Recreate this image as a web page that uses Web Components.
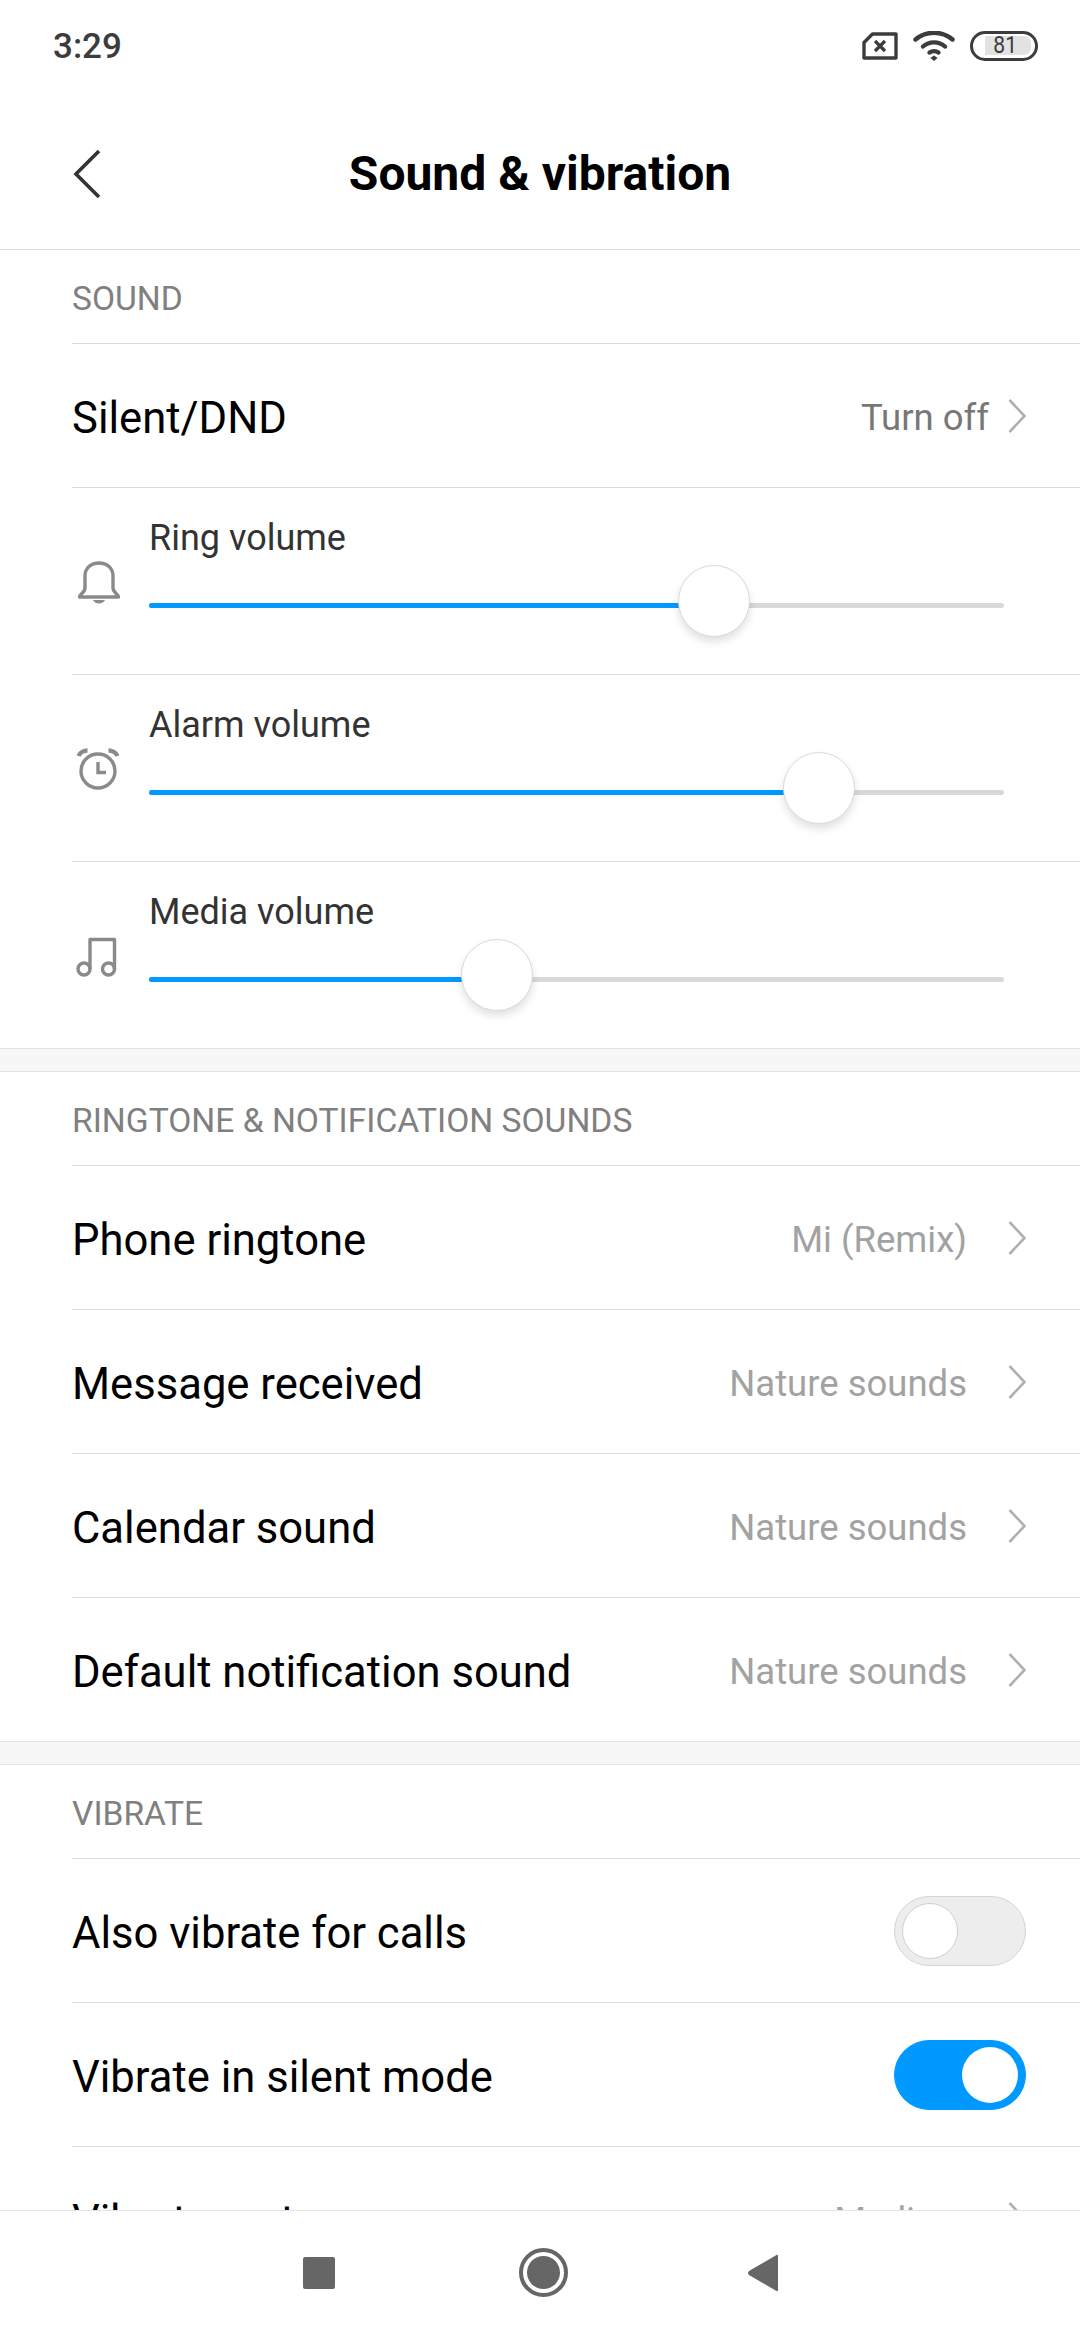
<!DOCTYPE html>
<html><head><meta charset="utf-8">
<style>
html,body{margin:0;padding:0;background:#fff}
body{width:1080px;height:2340px;overflow:hidden;font-family:Roboto,"Liberation Sans",sans-serif}
#app{display:flex;flex-direction:column;width:1080px;height:2340px}
#scroll{flex:1;min-height:0;overflow:hidden}
</style></head><body>
<div id="app">
<status-bar></status-bar>
<title-bar>Sound &amp; vibration</title-bar>
<div id="scroll">
  <section-head>SOUND</section-head>
  <nav-row value="Turn off" dark>Silent/DND</nav-row>
  <volume-row icon="bell" pos="565">Ring volume</volume-row>
  <volume-row icon="alarm" pos="670">Alarm volume</volume-row>
  <volume-row icon="music" pos="348">Media volume</volume-row>
  <section-gap></section-gap>
  <section-head>RINGTONE &amp; NOTIFICATION SOUNDS</section-head>
  <nav-row value="Mi (Remix)">Phone ringtone</nav-row>
  <nav-row value="Nature sounds">Message received</nav-row>
  <nav-row value="Nature sounds">Calendar sound</nav-row>
  <nav-row value="Nature sounds">Default notification sound</nav-row>
  <section-gap></section-gap>
  <section-head>VIBRATE</section-head>
  <toggle-row>Also vibrate for calls</toggle-row>
  <toggle-row on>Vibrate in silent mode</toggle-row>
  <nav-row value="Medium">Vibrate on tap</nav-row>
</div>
<nav-bar></nav-bar>
</div>
<script>
function def(name, html, init){
  customElements.define(name, class extends HTMLElement{
    constructor(){super();this.attachShadow({mode:'open'}).innerHTML=html;}
    connectedCallback(){ if(init) init(this,this.shadowRoot); }
  });
}
def('status-bar',`<style>
:host{display:flex;align-items:center;justify-content:space-between;height:92px;padding:0 42px 0 53px;box-sizing:border-box;color:#3c3c3c}
.t{font:500 35px/1 Roboto,sans-serif}
.r{display:flex;align-items:center;gap:15px}
svg{display:block}
.bat{position:relative;width:68px;height:30px;box-sizing:border-box;border:3.6px solid #3c3c3c;border-radius:15px}
.bat i{position:absolute;left:12px;top:1.5px;height:19px;width:46px;background:#e2e2e2;border-radius:0 7px 7px 0}
.bat span{position:absolute;left:19px;top:-1px;width:21px;text-align:center;font:400 24px/24px Roboto,sans-serif;color:#3c3c3c;transform:scaleX(.88)}
</style><span class="t">3:29</span><div class="r">
<svg width="36" height="28" viewBox="0 0 36 28" fill="none" stroke="#3c3c3c" stroke-width="3.4" stroke-linejoin="round"><path d="M10.500 2H34V26H2V10.500Z"/><path d="M13 9 L23 19 M23 9 L13 19" stroke-width="3.2"/></svg>
<svg width="42" height="30" viewBox="0 0 42 30" fill="none" stroke="#3c3c3c" stroke-width="4.4" stroke-linecap="round"><path d="M2.500 8.500C13 -.500 29 -.500 39.500 8.500"/><path d="M10 15.500C16 10 26 10 32 15.500"/><path d="M16.500 21.500C19 19.800 23 19.800 25.500 21.500" /><path d="M21 24.500l3.600 2.600L21 30l-3.600-2.900z" fill="#3c3c3c" stroke="none"/></svg>
<div class="bat"><i></i><span>81</span></div></div>`);
def('title-bar',`<style>
:host{display:block;position:relative;height:157px;border-bottom:1px solid #dcdcdc}
.b{height:157px;box-sizing:border-box;padding-top:7px;display:flex;align-items:center;justify-content:center;font:700 48px/1 Roboto,sans-serif;color:#000}
svg{position:absolute;left:72px;top:57px}
</style><svg width="30" height="50" viewBox="0 0 30 50" fill="none" stroke="#333" stroke-width="3.6"><path d="M27 2 L4 25 L27 48"/></svg><div class="b"><slot></slot></div>`);
def('section-head',`<style>
:host{display:block;margin-left:72px;height:93px;border-bottom:1px solid #dcdcdc;font:400 33.6px/1 Roboto,sans-serif;color:#808080}
div{height:93px;box-sizing:border-box;padding-top:4px;display:flex;align-items:center}
</style><div><slot></slot></div>`);
def('section-gap',`<style>:host{display:block;position:relative;height:22px;margin-top:-1px;background:#f7f7f7;border-top:1px solid #e2e2e2;border-bottom:1px solid #e2e2e2}</style>`);
const chev=`<svg width="18" height="34" viewBox="0 0 18 34" fill="none" stroke="#b0b0b0" stroke-width="2.6"><path d="M1.500 1 L16.500 17 L1.500 33"/></svg>`;
def('nav-row',`<style>
:host{display:block;margin-left:72px;height:143px;border-bottom:1px solid #dcdcdc;}
.w{height:143px;box-sizing:border-box;padding:6px 54px 0 0;display:flex;align-items:center;justify-content:space-between;font:400 43.6px/1 Roboto,sans-serif;color:#000}
.v{display:flex;align-items:center;gap:41px;font-size:36.5px;color:#a2a2a2}
:host([dark]) .v{color:#777;gap:19px}
svg{display:block;margin-top:-6px}
</style><div class="w"><span><slot></slot></span><span class="v"><span id="v"></span>${chev}</span></div>`,
(el,s)=>{s.getElementById('v').textContent=el.getAttribute('value')});
const icons={
bell:`<svg width="44" height="44" viewBox="0 0 44 44" fill="none" stroke="#8a8a8a" stroke-width="3.4" stroke-linejoin="round"><path d="M3.500 36C3.500 33.500 9 31.500 9 27V15C9 7 15 2 23 2S37 7 37 15V27C37 31.500 42.500 33.500 42.500 36Z"/><path d="M17 39C19 43.500 27 43.500 29 39Z" fill="#8a8a8a" stroke="none"/></svg>`,
alarm:`<svg width="44" height="44" viewBox="0 0 44 44" fill="none" stroke="#8a8a8a" stroke-width="3.4"><circle cx="22" cy="23" r="17"/><path d="M22 14V24.500H30"/><path d="M2.500 8C4 4.500 8 2.500 11.500 2.500M41.500 8C40 4.500 36 2.500 32.500 2.500" stroke-width="4.4"/></svg>`,
music:`<svg width="44" height="44" viewBox="0 0 44 44" fill="none" stroke="#8a8a8a" stroke-width="3.4" stroke-linejoin="round"><circle cx="8" cy="34" r="6"/><circle cx="32.500" cy="34" r="6"/><path d="M14 34V4.500H38.500V34"/></svg>`};
def('volume-row',`<style>
:host{display:block;margin-left:72px;height:186px;border-bottom:1px solid #dcdcdc;position:relative}
.w{display:grid;grid-template-columns:77px 855px;height:186px}
.ic{padding:73px 0 0 4px}
svg{display:block}
.m{display:flex;flex-direction:column}
.l{font:400 36px/1 Roboto,sans-serif;color:#333;height:99px;padding-top:32px;box-sizing:border-box;white-space:nowrap}
.tr{position:relative;height:5px;border-radius:3px;background:#d8d8d8;margin-top:16px}
.f{height:5px;background:#0099ff;border-radius:3px 0 0 3px}
.th{position:absolute;top:-38px;width:72px;height:72px;box-sizing:border-box;border-radius:50%;background:#fff;border:1px solid #dadada;box-shadow:0 5px 9px rgba(0,0,0,.12);transform:translateX(-36px)}
</style><div class="w"><div class="ic" id="ic"></div><div class="m"><div class="l"><slot></slot></div><div class="tr"><div class="f" id="f"></div><div class="th" id="th"></div></div></div></div>`,
(el,s)=>{const p=+el.getAttribute('pos');s.getElementById('ic').innerHTML=icons[el.getAttribute('icon')];s.getElementById('f').style.width=p+'px';s.getElementById('th').style.left=p+'px';});
def('toggle-row',`<style>
:host{display:block;margin-left:72px;height:143px;border-bottom:1px solid #dcdcdc}
.w{height:143px;display:flex;align-items:center;justify-content:space-between;padding-right:54px;font:400 43.6px/1 Roboto,sans-serif;color:#000}
.w>span{padding-top:6px}
.s{display:flex;align-items:center;box-sizing:border-box;width:132px;height:70px;border-radius:35px;background:#ededed;border:1px solid #d4d4d4;padding:0 7px}
.k{width:56px;height:56px;box-sizing:border-box;border-radius:50%;background:#fff;border:1px solid #cfcfcf}
:host([on]) .s{background:#0099ff;border-color:#0099ff;justify-content:flex-end}
:host([on]) .k{border:0}
</style><div class="w"><span><slot></slot></span><div class="s"><div class="k"></div></div></div>`);
def('nav-bar',`<style>
:host{display:flex;align-items:center;justify-content:center;height:129px;border-top:1px solid #e4e4e4;background:#fff}
.g{display:flex;align-items:center;margin-left:1px;margin-top:-6px}
.sq{width:32px;height:32px;background:#666;border-radius:2px}
.c{margin:0 180px 0 184px}
svg{display:block}
</style><div class="g"><div class="sq"></div>
<svg class="c" width="49" height="49" viewBox="0 0 49 49"><circle cx="24.500" cy="24.500" r="22.500" fill="none" stroke="#666" stroke-width="4"/><circle cx="24.500" cy="24.500" r="16.500" fill="#666"/></svg>
<svg width="30" height="38" viewBox="0 0 30 38"><path d="M30 2V36C30 37 29 37.500 28.500 37L1 21C-.3 20 -.3 18 1 17L28.500 1C29 .5 30 1 30 2Z" fill="#666"/></svg></div>`);
</script>
</body></html>
